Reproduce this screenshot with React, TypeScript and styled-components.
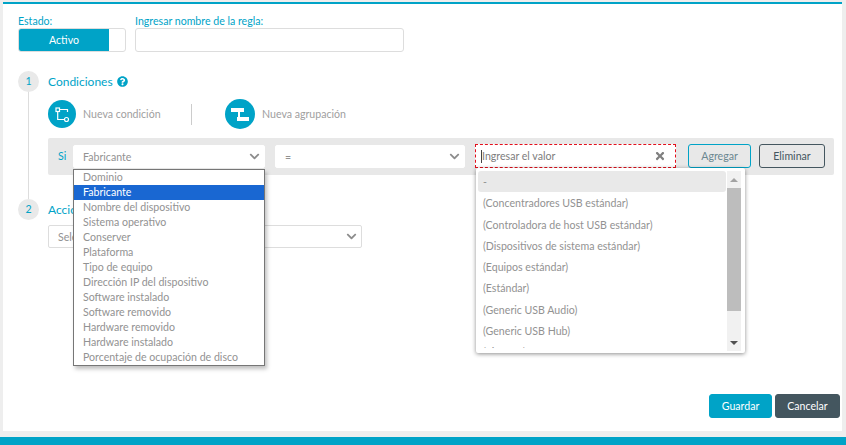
import React from 'react';
import styled, { createGlobalStyle } from 'styled-components';
import { FaChevronDown, FaQuestionCircle, FaTimes } from 'react-icons/fa';

const teal = '#00a3c7';
const dark = '#44565f';

const GlobalStyle = createGlobalStyle`
  html, body { margin: 0; padding: 0; }
  body {
    width: 846px;
    height: 445px;
    overflow: hidden;
    background: #eeeeee;
    font-family: Lato, "Noto Sans", sans-serif;
    font-size: 10.6px;
    color: #929292;
  }
`;

const Page = styled.div`
  display: flex;
  flex-direction: column;
  height: 445px;
`;

const Card = styled.main`
  box-sizing: border-box;
  height: 429px;
  margin: 2px 4px 0 3px;
  background: #fff;
  border-top: 2px solid ${teal};
  padding: 11px 2px 0 15px;
  display: flex;
  flex-direction: column;
`;

const BottomBar = styled.div`
  height: 8px;
  margin-top: 6px;
  background: ${teal};
`;

const HeaderRow = styled.div`
  display: flex;
  gap: 9px;
`;

const Field = styled.div`
  display: flex;
  flex-direction: column;
`;

const Label = styled.label`
  color: ${teal};
  line-height: 13px;
`;

const Toggle = styled.div`
  box-sizing: border-box;
  width: 108px;
  height: 24px;
  border: 1px solid #dddddd;
  border-radius: 3px;
  background: #fff;
  overflow: hidden;
`;

const ToggleOn = styled.div`
  width: 90px;
  height: 100%;
  background: ${teal};
  color: #fff;
  text-align: center;
  line-height: 22px;
`;

const TextBox = styled.div`
  box-sizing: border-box;
  width: 269px;
  height: 24px;
  border: 1px solid #dddddd;
  border-radius: 3px;
`;

const Steps = styled.div`
  margin-top: 19px;
  display: flex;
  flex-direction: column;
`;

const Step = styled.section<{ $h: number; $line?: boolean }>`
  display: grid;
  grid-template-columns: 21px 1fr;
  column-gap: 9px;
  height: ${(p) => p.$h}px;
  ${(p) => p.$line && `background: linear-gradient(#dddddd, #dddddd) 10px 0 / 1px 100% no-repeat;`}
`;

const StepNumber = styled.div`
  width: 21px;
  height: 21px;
  border-radius: 50%;
  background: #e9e9e9;
  color: ${teal};
  line-height: 21px;
  text-align: center;
`;

const StepBody = styled.div`
  display: flex;
  flex-direction: column;
  min-width: 0;
`;

const StepTitle = styled.h3`
  margin: 0;
  height: 21px;
  display: flex;
  align-items: center;
  gap: 4px;
  color: ${teal};
  font-size: 12px;
  font-weight: 400;
`;

const ActionRow = styled.div`
  display: flex;
  align-items: center;
  margin-top: 8px;
  height: 28px;
  color: #a0a0a0;
`;

const Action = styled.div<{ $w: number }>`
  width: ${(p) => p.$w}px;
  display: flex;
  align-items: center;
  gap: 7px;
`;

const Divider = styled.div`
  width: 1px;
  height: 21px;
  background: #cccccc;
  margin-right: 33px;
`;

const RoundIcon = styled.div<{ $size: number }>`
  width: ${(p) => p.$size}px;
  height: ${(p) => p.$size}px;
  border-radius: 50%;
  background: ${teal};
  display: flex;
  align-items: center;
  justify-content: center;
  flex: none;
`;

const ConditionRow = styled.div`
  box-sizing: border-box;
  margin-top: 10px;
  height: 37px;
  width: 786px;
  background: #e8e8e8;
  border-radius: 2px;
  padding: 6px 9px 0 10px;
  display: flex;
  align-items: flex-start;
`;

const Si = styled.span`
  color: ${teal};
  width: 15px;
  line-height: 24px;
`;

const SelectWrap = styled.div<{ $w: number; $mr: number; $mt?: number }>`
  position: relative;
  width: ${(p) => p.$w}px;
  margin-right: ${(p) => p.$mr}px;
  margin-top: ${(p) => p.$mt ?? 0}px;
  flex: none;
`;

const SelectBox = styled.div<{ $bordered?: boolean }>`
  box-sizing: border-box;
  height: 23px;
  padding: 0 4px 0 9px;
  background: #fff;
  border-radius: 2px;
  border: 1px solid ${(p) => (p.$bordered ? '#dddddd' : '#ffffff')};
  display: flex;
  align-items: center;
  justify-content: space-between;
  white-space: nowrap;
  svg { color: #8c8c8c; flex: none; }
`;

const ValueBox = styled.div`
  box-sizing: border-box;
  height: 24px;
  border: 1px dashed #e3101c;
  background: #fff;
  padding: 0 9px 0 5px;
  display: flex;
  align-items: center;
  justify-content: space-between;
  color: #7d7d7d;
  svg { color: #808080; }
`;

const Caret = styled.span`
  display: inline-block;
  width: 1px;
  height: 13px;
  background: #444;
`;

const Placeholder = styled.span`
  display: flex;
  align-items: center;
`;

const NativeList = styled.ul`
  position: absolute;
  z-index: 3;
  top: 24px;
  left: 0;
  box-sizing: border-box;
  width: 192px;
  margin: 0;
  padding: 0;
  list-style: none;
  background: #fff;
  border: 1px solid #767676;
  box-shadow: 2px 3px 4px rgba(0, 0, 0, 0.25);
`;

const NativeItem = styled.li<{ $active?: boolean }>`
  height: 15px;
  line-height: 14px;
  padding-left: 9px;
  white-space: nowrap;
  color: ${(p) => (p.$active ? '#fff' : '#929292')};
  background: ${(p) => (p.$active ? '#1967d2' : 'transparent')};
`;

const ValueList = styled.div`
  position: absolute;
  z-index: 3;
  top: 24px;
  left: 1px;
  width: 269px;
  height: 185px;
  box-sizing: border-box;
  background: #fff;
  border-radius: 2px;
  box-shadow: 0 1px 4px rgba(0, 0, 0, 0.45);
  padding: 3px 4px 2px 2px;
  display: flex;
  gap: 1px;
  overflow: hidden;
`;

const ValueItems = styled.ul`
  flex: 1;
  margin: 0 0 3px;
  padding: 0;
  list-style: none;
  overflow: hidden;
`;

const ValueItem = styled.li<{ $active?: boolean }>`
  height: 21.3px;
  line-height: 23px;
  padding-left: 5px;
  border-radius: 3px;
  white-space: nowrap;
  background: ${(p) => (p.$active ? '#e9e9e9' : 'transparent')};
`;

const ScrollTrack = styled.div`
  width: 14px;
  flex: none;
  background: #f1f1f1;
  display: flex;
  flex-direction: column;
`;

const ScrollArrow = styled.div<{ $up?: boolean }>`
  height: 17px;
  display: flex;
  align-items: center;
  justify-content: center;
  flex: none;
  &::before {
    content: '';
    border-left: 4px solid transparent;
    border-right: 4px solid transparent;
    ${(p) => (p.$up ? 'border-bottom: 4px solid #a3a3a3;' : 'border-top: 4px solid #505050;')}
  }
`;

const ScrollThumb = styled.div`
  height: 123px;
  background: #bdbdbd;
`;

const ScrollGap = styled.div`
  flex: 1;
`;

const Button = styled.button<{ $variant: 'outlineTeal' | 'outlineDark' | 'teal' | 'dark' }>`
  box-sizing: border-box;
  height: 24px;
  padding: 0;
  border-radius: 3px;
  font: inherit;
  border: 1px solid ${(p) => (p.$variant === 'outlineTeal' || p.$variant === 'teal' ? teal : dark)};
  background: ${(p) => (p.$variant === 'teal' ? teal : p.$variant === 'dark' ? dark : 'transparent')};
  color: ${(p) => (p.$variant === 'teal' || p.$variant === 'dark' ? '#fff' : p.$variant === 'outlineTeal' ? '#6b8791' : dark)};
`;

const AddButton = styled(Button)`
  width: 63px;
  margin-right: 8px;
`;

const RemoveButton = styled(Button)`
  width: 66px;
`;

const ActionSelect = styled(SelectWrap)`
  margin-top: 5px;
`;

const Footer = styled.div`
  margin-top: auto;
  margin-bottom: 13px;
  display: flex;
  justify-content: flex-end;
  gap: 3px;
`;

const SaveButton = styled(Button)`
  width: 63px;
`;

const CancelButton = styled(Button)`
  width: 65px;
`;

const NodesIcon = () => (
  <svg width="15" height="15" viewBox="0 0 15 15" fill="none" stroke="#fff" strokeWidth="1.2">
    <rect x="1" y="1" width="3.5" height="3.5" />
    <path d="M4.5 2.5H12.5V5M2.7 4.5V12.5H9.5" />
    <circle cx="11.5" cy="12.5" r="2" />
  </svg>
);

const GroupIcon = () => (
  <svg width="18" height="13" viewBox="0 0 18 13" fill="#fff">
    <rect x="0" y="0" width="13" height="4" />
    <rect x="7" y="4" width="2" height="5" />
    <rect x="6" y="9" width="12" height="4" />
  </svg>
);

const deviceFields = [
  'Dominio',
  'Fabricante',
  'Nombre del dispositivo',
  'Sistema operativo',
  'Conserver',
  'Plataforma',
  'Tipo de equipo',
  'Dirección IP del dispositivo',
  'Software instalado',
  'Software removido',
  'Hardware removido',
  'Hardware instalado',
  'Porcentaje de ocupación de disco',
];

const values = [
  '-',
  '(Concentradores USB estándar)',
  '(Controladora de host USB estándar)',
  '(Dispositivos de sistema estándar)',
  '(Equipos estándar)',
  '(Estándar)',
  '(Generic USB Audio)',
  '(Generic USB Hub)',
  '(ninguno)',
];

export default function App() {
  return (
    <Page>
      <GlobalStyle />
      <Card>
        <HeaderRow>
          <Field>
            <Label>Estado:</Label>
            <Toggle>
              <ToggleOn>Activo</ToggleOn>
            </Toggle>
          </Field>
          <Field>
            <Label>Ingresar nombre de la regla:</Label>
            <TextBox />
          </Field>
        </HeaderRow>

        <Steps>
          <Step $h={128} $line>
            <StepNumber>1</StepNumber>
            <StepBody>
              <StepTitle>
                Condiciones <FaQuestionCircle size={11} />
              </StepTitle>
              <ActionRow>
                <Action $w={143}>
                  <RoundIcon $size={28}>
                    <NodesIcon />
                  </RoundIcon>
                  Nueva condición
                </Action>
                <Divider />
                <Action $w={140}>
                  <RoundIcon $size={30}>
                    <GroupIcon />
                  </RoundIcon>
                  Nueva agrupación
                </Action>
              </ActionRow>
              <ConditionRow>
                <Si>Si</Si>
                <SelectWrap $w={192} $mr={10} $mt={1}>
                  <SelectBox>
                    Fabricante
                    <FaChevronDown size={11} />
                  </SelectBox>
                  <NativeList>
                    {deviceFields.map((f) => (
                      <NativeItem key={f} $active={f === 'Fabricante'}>
                        {f}
                      </NativeItem>
                    ))}
                  </NativeList>
                </SelectWrap>
                <SelectWrap $w={190} $mr={10} $mt={1}>
                  <SelectBox>
                    =
                    <FaChevronDown size={11} />
                  </SelectBox>
                </SelectWrap>
                <SelectWrap $w={201} $mr={12}>
                  <ValueBox>
                    <Placeholder>
                      <Caret />
                      Ingresar el valor
                    </Placeholder>
                    <FaTimes size={12} />
                  </ValueBox>
                  <ValueList>
                    <ValueItems>
                      {values.map((v) => (
                        <ValueItem key={v} $active={v === '-'}>
                          {v}
                        </ValueItem>
                      ))}
                    </ValueItems>
                    <ScrollTrack>
                      <ScrollArrow $up />
                      <ScrollThumb />
                      <ScrollGap />
                      <ScrollArrow />
                    </ScrollTrack>
                  </ValueList>
                </SelectWrap>
                <AddButton $variant="outlineTeal">Agregar</AddButton>
                <RemoveButton $variant="outlineDark">Eliminar</RemoveButton>
              </ConditionRow>
            </StepBody>
          </Step>
          <Step $h={60}>
            <StepNumber>2</StepNumber>
            <StepBody>
              <StepTitle>Acciones</StepTitle>
              <ActionSelect $w={314} $mr={0}>
                <SelectBox $bordered>
                  Seleccione la acción a realizar
                  <FaChevronDown size={11} />
                </SelectBox>
              </ActionSelect>
            </StepBody>
          </Step>
        </Steps>

        <Footer>
          <SaveButton $variant="teal">Guardar</SaveButton>
          <CancelButton $variant="dark">Cancelar</CancelButton>
        </Footer>
      </Card>
      <BottomBar />
    </Page>
  );
}
